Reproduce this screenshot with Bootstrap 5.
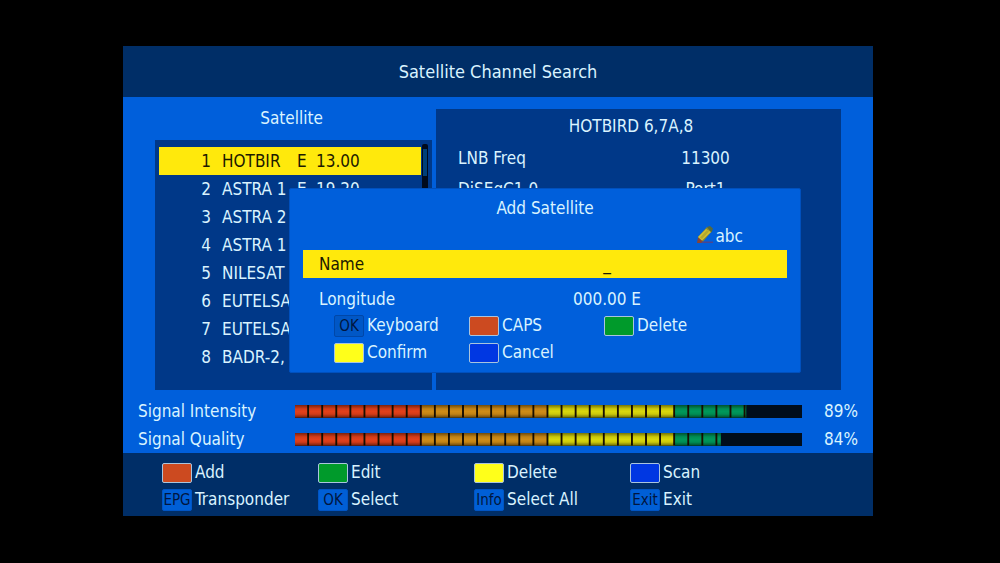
<!DOCTYPE html>
<html lang="en">
<head>
<meta charset="utf-8">
<meta name="viewport" content="width=device-width, initial-scale=1">
<title>Satellite Channel Search</title>
<link href="https://cdn.jsdelivr.net/npm/bootstrap@5.3.0/dist/css/bootstrap.min.css" rel="stylesheet">
<style>
  :root { --ink: #d9f3ff; --blue: #005fdb; --panel: #003888; --navy: #002e67; --gold: #ffe90c; }
  body { background: #000; color: var(--ink); font-family: "DejaVu Sans Condensed", "Noto Sans", sans-serif; font-size: 17px; line-height: 28px; padding: 0 127px 1px 123px; }
  .screen { background: var(--blue); }
  .screen-title { background: var(--navy); font-size: 18px; line-height: 51px; }
  .workspace { display: grid; grid-template-columns: 277fr 405fr; padding: 7px 32px 0; gap: 4px; }
  .info-side { background: var(--panel); margin-top: 5px; padding: 3px 37px 0 22px; }
  .heading { font-size: 17px; line-height: 28px; }
  .sat-box { background: var(--panel); margin-top: 8px; padding: 7px 4px 19px; }
  .sat-table { width: 100%; }
  .sat-table td { height: 28px; padding: 0; line-height: 28px; white-space: nowrap; }
  .sat-table .picked td { background: var(--gold); color: #1d1a00; }
  .c-num { width: 52px; text-align: right; }
  .sat-table .c-name { width: 86px; padding-left: 11px; }
  .c-dir { width: 19px; }
  .rail { width: 6px; background: #000a1c; margin: -3px 0 0 1px; border-radius: 2px; padding: 5px 1px 0; }
  .rail-thumb { height: 27px; background: #003f78; }
  .info-row { height: 31px; margin-right: -37px; }
  .info-row dt { flex: 112 1 0; }
  .info-row dd { flex: 271 1 0; text-align: center; margin: 0; }
  .signals { padding: 7px 15px 0; }
  .signal-row { height: 28px; }
  .signal-name { flex: 157 1 0; }
  .signal-value { flex: 56 1 0; text-align: right; }
  .meter { flex: 507 1 0; height: 13px; border-radius: 0; background: #000d1b; }
  .meter-fill { width: 100%; clip-path: inset(0 calc(100% - var(--level)) 0 0);
    background:
      linear-gradient(#0007 0, #0001 30%, #0000 50%, #0001 70%, #0008 100%),
      linear-gradient(90deg, #0000 calc(100% - 2px), #1a1000 calc(100% - 2px)) 0 0 / calc(100% / 36) 100%,
      linear-gradient(90deg, #e2401b 25%, #cf8c17 25% 50%, #d9d70c 50% 75%, #00985a 75%); }
  .legend { background: var(--navy); padding: 6px 39px 3px; }
  .key-grid { display: grid; grid-auto-rows: 27px; }
  .legend .key-grid { grid-template-columns: repeat(4, 156fr) 48fr; }
  .key { border: 0; background: none; color: inherit; padding: 0; display: flex; align-items: center; gap: 3px; text-align: left; line-height: 27px; white-space: nowrap; }
  .legend .key:nth-child(4n) { grid-column: 4 / 6; }
  .chip { width: 30px; height: 20px; border: 1px solid #a9c4dd; border-radius: 2px; flex: none; }
  .chip-red { background: #cc4a20; } .chip-green { background: #009a2b; }
  .chip-yellow { background: #ffff1a; } .chip-blue { background: #0037e2; }
  .chip-cap { height: 22px; border: 1px solid #0055c4; background: #005fd6; color: #00163f; font-size: 15px; line-height: 20px; display: flex; justify-content: center; }
  .dialog-box { position: absolute; left: 166px; right: 72px; top: 142px; height: 185px; background: var(--blue); border: 1px solid #0050bd; border-radius: 2px; padding: 5px 13px 0; }
  .mode { padding-right: 44px; height: 28px; gap: 2px; }
  .field { height: 28px; padding-left: 16px; }
  .field label { flex: 108 1 0; }
  .field input { flex: 360 1 0; min-width: 0; border: 0; padding: 0; background: none; color: inherit; text-align: center; outline: 0; height: 28px; }
  .field-on { background: var(--gold); color: #1d1a00; margin-bottom: 7px; }
  .dialog-box .key-grid { grid-template-columns: repeat(3, 1fr); padding: 0 48px 0 31px; margin-top: -1px; }
  .dialog-box .chip-cap { border-color: #0047a8; background: #0057c6; }
</style>
</head>
<body class="min-vh-100 d-flex flex-column justify-content-center">
<main class="screen position-relative">
  <h1 class="screen-title text-center fw-normal m-0">Satellite Channel Search</h1>

  <div class="workspace">
    <section>
      <h2 class="heading text-center fw-normal m-0 pe-1">Satellite</h2>
      <div class="sat-box d-flex">
        <table class="sat-table">
          <tbody>
            <tr class="picked"><td class="c-num">1</td><td class="c-name">HOTBIR</td><td class="c-dir">E</td><td>13.00</td></tr>
            <tr><td class="c-num">2</td><td class="c-name">ASTRA 1</td><td class="c-dir">E</td><td>19.20</td></tr>
            <tr><td class="c-num">3</td><td class="c-name">ASTRA 2</td><td></td><td></td></tr>
            <tr><td class="c-num">4</td><td class="c-name">ASTRA 1</td><td></td><td></td></tr>
            <tr><td class="c-num">5</td><td class="c-name">NILESAT</td><td></td><td></td></tr>
            <tr><td class="c-num">6</td><td class="c-name">EUTELSA</td><td></td><td></td></tr>
            <tr><td class="c-num">7</td><td class="c-name">EUTELSA</td><td></td><td></td></tr>
            <tr><td class="c-num">8</td><td class="c-name">BADR-2,</td><td></td><td></td></tr>
          </tbody>
        </table>
        <div class="rail"><div class="rail-thumb"></div></div>
      </div>
    </section>

    <section class="info-side">
      <h2 class="heading text-center fw-normal m-0 mb-1">HOTBIRD 6,7A,8</h2>
      <dl class="m-0">
        <div class="info-row d-flex"><dt class="fw-normal">LNB Freq</dt><dd>11300</dd></div>
        <div class="info-row d-flex"><dt class="fw-normal">DiSEqC1.0</dt><dd>Port1</dd></div>
      </dl>
    </section>
  </div>

  <section class="signals">
    <div class="signal-row d-flex align-items-center">
      <span class="signal-name">Signal Intensity</span>
      <div class="progress meter" role="progressbar" aria-label="Signal Intensity" aria-valuenow="89" aria-valuemin="0" aria-valuemax="100"><div class="progress-bar meter-fill" style="--level: 89%"></div></div>
      <span class="signal-value">89%</span>
    </div>
    <div class="signal-row d-flex align-items-center">
      <span class="signal-name">Signal Quality</span>
      <div class="progress meter" role="progressbar" aria-label="Signal Quality" aria-valuenow="84" aria-valuemin="0" aria-valuemax="100"><div class="progress-bar meter-fill" style="--level: 84%"></div></div>
      <span class="signal-value">84%</span>
    </div>
  </section>

  <footer class="legend">
    <div class="key-grid">
      <button class="key" type="button"><span class="chip chip-red"></span>Add</button>
      <button class="key" type="button"><span class="chip chip-green"></span>Edit</button>
      <button class="key" type="button"><span class="chip chip-yellow"></span>Delete</button>
      <button class="key" type="button"><span class="chip chip-blue"></span>Scan</button>
      <button class="key" type="button"><span class="chip chip-cap">EPG</span>Transponder</button>
      <button class="key" type="button"><span class="chip chip-cap">OK</span>Select</button>
      <button class="key" type="button"><span class="chip chip-cap">Info</span>Select All</button>
      <button class="key" type="button"><span class="chip chip-cap">Exit</span>Exit</button>
    </div>
  </footer>

  <form class="dialog-box" role="dialog" aria-labelledby="dialog-title">
    <h2 class="heading text-center fw-normal m-0" id="dialog-title">Add Satellite</h2>
    <div class="mode d-flex justify-content-end align-items-center">
      <svg width="18" height="20" viewBox="0 0 18 20" aria-hidden="true">
        <path d="M5 15.500h12v1.500H5z" fill="#4a4690"/>
        <path d="M1 17l1-6 5 4-2 2z" fill="#8a4434"/>
        <path d="M2 11L11 1l5 4L7 15.500z" fill="#8f8a28"/>
        <path d="M2 11L10 3l5 3L6 14.500z" fill="#d0bf36"/>
        <path d="M4 11.500L11 4l2 1.500-7 7.500z" fill="#b5a92c"/>
        <path d="M11 1l3-1 3 2.500-1.500 4z" fill="#566a3c"/>
      </svg>
      <span>abc</span>
    </div>
    <div class="field field-on d-flex"><label for="sat-name">Name</label><input id="sat-name" type="text" value="_"></div>
    <div class="field d-flex"><label for="sat-long">Longitude</label><input id="sat-long" type="text" value="000.00 E"></div>
    <div class="key-grid">
      <button class="key" type="button"><span class="chip chip-cap">OK</span>Keyboard</button>
      <button class="key" type="button"><span class="chip chip-red"></span>CAPS</button>
      <button class="key" type="button"><span class="chip chip-green"></span>Delete</button>
      <button class="key" type="submit"><span class="chip chip-yellow"></span>Confirm</button>
      <button class="key" type="button"><span class="chip chip-blue"></span>Cancel</button>
    </div>
  </form>
</main>
<script src="https://cdn.jsdelivr.net/npm/bootstrap@5.3.0/dist/js/bootstrap.bundle.min.js"></script>
</body>
</html>
